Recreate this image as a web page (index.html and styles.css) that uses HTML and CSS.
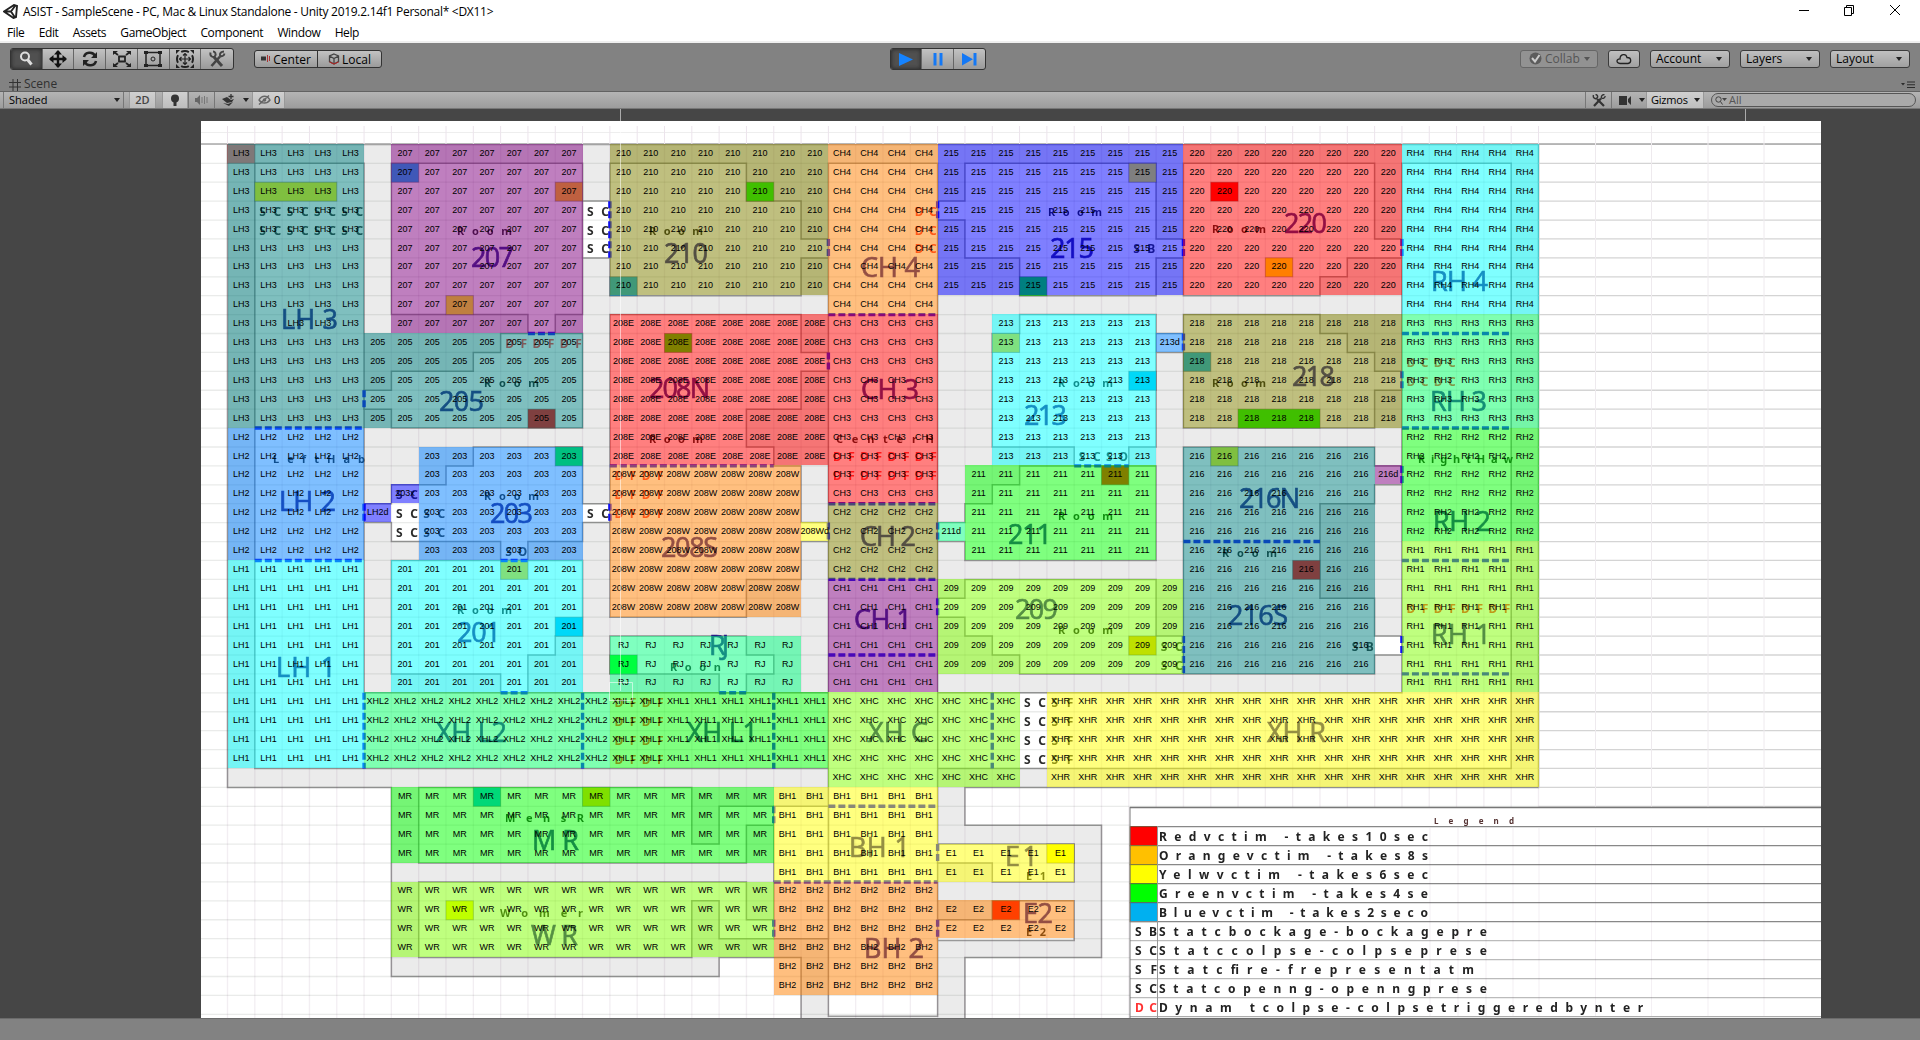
FILE: index.html
```html
<!DOCTYPE html>
<html lang="en">
<head>
<meta charset="utf-8">
<title>ASIST - SampleScene - Unity</title>
<link rel="stylesheet" href="styles.css">
</head>
<body>
<header class="titlebar">
  <svg class="logo" width="15" height="15" viewBox="0 0 15 15"><path d="M1 7.5 11 1l3 1-1 11-2.500 1zM1 7.500h7M8 7.500 12 2M8 7.500l4 6" fill="none" stroke="#222" stroke-width="1.900"/></svg>
  <span class="title">ASIST - SampleScene - PC, Mac &amp; Linux Standalone - Unity 2019.2.14f1 Personal* &lt;DX11&gt;</span>
  <svg class="winctl" width="112" height="20" viewBox="0 0 112 20" fill="none" stroke="#000"><path d="M4 10.500h10M49.500 7.500h7v8h-7zM51.500 7.500v-2h7v8h-2M95 5l10 10M105 5 95 15"/></svg>
</header>
<nav class="menu"><span>File</span><span>Edit</span><span>Assets</span><span>GameObject</span><span>Component</span><span>Window</span><span>Help</span></nav>

<div class="toolbar">
  <div class="group tools">
    <i class="on"><svg viewBox="0 0 22 20"><circle cx="10" cy="7.500" r="4" fill="none" stroke="#ddd" stroke-width="2"/><path d="m12.500 10.500 4 5" stroke="#ddd" stroke-width="3"/></svg></i>
    <i><svg viewBox="0 0 22 20"><path d="M11 2v16M3 10h16" stroke="#111" stroke-width="2.400"/><path d="m11 1 4 4.500H7zM11 19l4-4.500H7zM2 10l4.500-4v8zM20 10l-4.500-4v8z" fill="#111"/></svg></i>
    <i><svg viewBox="0 0 22 20"><path d="M5 8c1-5 9-6 11-1M17 12c-1 5-9 6-11 1" fill="none" stroke="#222" stroke-width="2.500"/><path d="M18 3v6h-6zM4 17v-6h6z" fill="#222"/></svg></i>
    <i><svg viewBox="0 0 22 20"><path d="M8 7.500h6v5H8zM7 6 3 3m12 3 4-3M7 14l-4 3m12-3 4 3" fill="none" stroke="#222" stroke-width="1.800"/><path d="M2 2h5L2 6zM20 2h-5l5 4zM2 18h5l-5-4zM20 18h-5l5-4z" fill="#222"/></svg></i>
    <i><svg viewBox="0 0 22 20"><path d="M4 3.500h14v13H4z" fill="none" stroke="#222" stroke-width="1.500"/><path d="M2 2h4v3H2zM16 2h4v3h-4zM2 15h4v3H2zM16 15h4v3h-4z" fill="#222"/><circle cx="11" cy="10" r="2" fill="none" stroke="#222"/></svg></i>
    <i><svg viewBox="0 0 22 20"><path d="M11 5v10M6 10h10M9 6.500l2-2 2 2M9 13.500l2 2 2-2M7.500 8l-2 2 2 2M14.500 8l2 2-2 2" fill="none" stroke="#222" stroke-width="1.200"/><circle cx="11" cy="10" r="8" fill="none" stroke="#222" stroke-width="2" stroke-dasharray="8 4.500" stroke-dashoffset="4"/><path d="M2 1h4L2 5zM20 1h-4l4 4zM2 19h4l-4-4zM20 19h-4l4-4z" fill="#222"/></svg></i>
    <i><svg viewBox="0 0 22 20"><path d="M5.500 17 14 7.500" stroke="#444" stroke-width="2.600"/><path d="m8 8 8 9" stroke="#444" stroke-width="3"/><path d="M4.500 3.500c-1 4 3 5.500 4.500 3.500s0-4.500-2-4.500M18 2.500c-3 0-4.500 2-4 4 1.500 1.500 4 .5 4.500-2" fill="none" stroke="#444" stroke-width="1.900"/></svg></i>
  </div>
  <div class="group pivot">
    <b><svg width="10" height="8" viewBox="0 0 10 8"><path d="M0 1.500h5v4H0z" fill="#333"/><path d="M6 0h1v7H6zM8 1h1v5H8z" fill="#a33"/></svg>Center</b>
    <b><svg width="12" height="12" viewBox="0 0 12 12"><path d="m6 1 4.500 2v5.500L6 11 1.500 8.500V3zM1.500 3 6 5.500 10.500 3M6 5.500V11" fill="none" stroke="#444" stroke-width="1.300"/><path d="m1.500 9 4.500 2 4.500-2" stroke="#b22" fill="none"/></svg>Local</b>
  </div>
  <div class="group play">
    <i class="on"><svg viewBox="0 0 22 20"><path d="m4 4 14 6.500L4 17z" fill="#1583ff"/></svg></i>
    <i><svg viewBox="0 0 22 20"><path d="M6.500 4h3v12.500h-3zM12.500 4h3v12.500h-3z" fill="#1478f5"/></svg></i>
    <i><svg viewBox="0 0 22 20"><path d="m4 4 11 6.200L4 16.500zM15.500 4h3v12.500h-3z" fill="#1478f5"/></svg></i>
  </div>
  <div class="right">
    <b class="btn off"><svg width="13" height="13" viewBox="0 0 13 13"><circle cx="6.500" cy="6.500" r="6" fill="#5c5c5c"/><path d="m3 6 3 3.500L10.500 3" fill="none" stroke="#ccc" stroke-width="2"/></svg>Collab<em></em></b>
    <b class="btn cloud"><svg width="16" height="12" viewBox="0 0 16 12"><path d="M4 10.500C-.5 10 .5 5.500 4 6 4 1 10 0 11 4.500c5 0 4.500 5.500 1 6z" fill="none" stroke="#222" stroke-width="1.300"/></svg></b>
    <b class="btn wide">Account<em></em></b>
    <b class="btn wide">Layers<em></em></b>
    <b class="btn wide">Layout<em></em></b>
  </div>
</div>

<div class="tabs">
  <svg width="12" height="12" viewBox="0 0 12 12"><path d="M4 0v12M8.500 0v12M0 3.500h12M0 8h12" stroke="#333"/></svg>
  <span>Scene</span>
  <svg class="tabmenu" width="14" height="8" viewBox="0 0 14 8"><path d="M0 2h4L2 4.500zM6 .500h8v1H6zM6 3.200h8v1H6zM6 6h8v1H6z" fill="#2c2c2c"/></svg>
</div>

<div class="viewbar">
  <span class="shaded">Shaded<em></em></span>
  <span class="lit two">2D</span>
  <span class="lit bulb"><svg width="10" height="13" viewBox="0 0 10 13"><circle cx="5" cy="4.500" r="4" fill="#333"/><path d="M3.500 8h3v4h-3z" fill="#333"/></svg></span>
  <span class="audio"><svg width="13" height="10" viewBox="0 0 13 10"><path d="M0 3h2l3-3v10L2 7H0z" fill="#666"/><path d="M7 2v6M9.500 1v8M12 2v6" stroke="#777"/></svg></span>
  <span class="fx"><svg width="13" height="12" viewBox="0 0 13 12"><path d="m0 5 5-2 4 3 3-1-2 3-5 1zM1 9l5 1 5-2-4 4z" fill="#333"/><path d="M9 0v5M6.500 2.500h5" stroke="#333" stroke-width="1.300"/></svg><em></em></span>
  <span class="lit eye"><svg width="13" height="10" viewBox="0 0 13 10"><path d="M1 5c3-5 8-5 11 0-3 4-8 4-11 0zM1 9.500 11 .5" fill="none" stroke="#666" stroke-width="1.400"/><circle cx="6.500" cy="5" r="1.800" fill="#666"/></svg>0</span>
  <span class="wrench"><svg width="14" height="13" viewBox="0 0 14 13"><path d="m2 12 7-7.500M5 5l7 7" fill="none" stroke="#333" stroke-width="2.200"/><path d="M1.500 1c-1 3 2 4.500 3.500 3s0-3.500-1.500-3.500M12.500.5C10 .5 9 2.500 9.500 4c1.500 1 3.500 0 3.700-2" fill="none" stroke="#333" stroke-width="1.400"/></svg></span>
  <span class="cam"><svg width="13" height="9" viewBox="0 0 13 9"><path d="M0 0h8v9H0zM9 3l3-3v9L9 6z" fill="#333"/></svg><em></em></span>
  <span class="lit giz">Gizmos<em></em></span>
  <span class="search"><svg width="12" height="9" viewBox="0 0 12 9"><circle cx="3.500" cy="3.500" r="2.700" fill="none" stroke="#444"/><path d="m5.500 5.500 2 3" stroke="#444"/><path d="M7 2h5L9.500 5z" fill="#444"/></svg>All</span>
</div>

<main class="viewport">
  <div class="map">
    <svg id="plan" width="1620" height="897" viewBox="201 121 1620 897"></svg>
    <div id="rooms" class="rooms"></div>
  </div>
  <svg class="gizmo" width="1920" height="909" viewBox="0 109 1920 909"><path d="M620.500 109v582M1745.500 109v12M609.500 682.500h23v18h-23z" fill="none" stroke="#fff" stroke-opacity=".55"/></svg>
</main>
<footer class="status"></footer>
<script src="plan.js"></script>
</body>
</html>
```
FILE: styles.css
```css
* { box-sizing: border-box; }
body { margin: 0; width: 1920px; height: 1040px; overflow: hidden; background: #828282; display: flex; flex-direction: column; font-family: "Open Sans", "Noto Sans", sans-serif; font-size: 12px; color: #000; }
svg { display: block; flex: none; }
.titlebar { height: 24px; background: #fff; display: flex; padding-left: 3px; }
.logo { margin-top: 4px; }
.title { margin-left: 5px; line-height: 23px; white-space: nowrap; letter-spacing: -0.28px; }
.winctl { margin-left: auto; margin-right: 13px; }
.menu { height: 19px; background: #fff; border-bottom: 2px solid #efefef; display: flex; gap: 14.2px; padding-left: 7px; line-height: 17px; letter-spacing: -0.38px; }
.toolbar { height: 35px; display: flex; align-items: flex-start; padding-top: 5px; position: relative; }
.group { display: flex; border: 1px solid #333; border-radius: 3px; height: 22px; overflow: hidden; background: linear-gradient(#c2c2c2, #9a9a9a); }
.group i { width: 32px; border-right: 1px solid #666; display: flex; justify-content: center; align-items: center; }
.group i:last-child { border: 0; }
.group i svg { width: 22px; height: 20px; }
.group .on { background: #505050; box-shadow: inset 0 0 4px #222; }
.tools { margin-left: 10px; width: 224px; }
.pivot { margin: 2px 0 0 20px; height: 18px; width: 128px; }
.pivot b { width: 64px; border-right: 1px solid #333; display: flex; align-items: center; justify-content: center; gap: 2px; font-weight: 400; }
.pivot b:last-child { border: 0; }
.play { margin-left: 508px; width: 96px; }
.right { margin: 2px 10px 0 auto; display: flex; gap: 10px; }
.btn { height: 18px; border: 1px solid #3c3c3c; border-radius: 3px; background: linear-gradient(#c0c0c0, #a0a0a0); font-weight: 400; display: flex; align-items: center; padding: 0 7px 1px 5px; }
em { width: 0; height: 0; border: 3px solid transparent; border-top: 4px solid #222; border-bottom: 0; }
.btn em { margin-left: auto; }
.off { width: 78px; padding-left: 8px; gap: 3px; color: #555; border-color: #666; background: #929292; }
.off em { border-top-color: #555; }
.cloud { width: 32px; padding: 0 7px; }
.wide { width: 80px; }
.tabs { height: 13px; display: flex; align-items: center; padding-left: 9px; gap: 3px; color: #303030; line-height: 13px; }
.tabs span { margin-top: -2px; }
.tabmenu { margin: 0 5px 0 auto; }
.viewbar { height: 18px; border-top: 1px solid #626262; border-bottom: 1px solid #777; background: linear-gradient(#b4b4b4, #9c9c9c); display: flex; font: 11px/16px "Open Sans", sans-serif; padding-left: 3px; }
.viewbar span { display: flex; align-items: center; border-left: 1px solid #777; border-right: 1px solid #777; }
.shaded { width: 121px; padding: 0 3px 0 5px; }
.shaded em, .giz em { margin-left: auto; }
.viewbar .lit { background: linear-gradient(#d0d0d0, #bebebe); border-color: #999; }
.two { margin-left: 5px; width: 27px; justify-content: center; font-weight: 600; color: #444; }
.bulb { margin-left: 6px; width: 26px; justify-content: center; }
.audio { width: 27px; justify-content: center; }
.viewbar .fx { width: 37px; padding-left: 7px; gap: 8px; border: 0; }
.eye { width: 33px; padding-left: 5px; gap: 3px; }
.wrench { margin-left: auto; width: 27px; justify-content: center; }
.viewbar .cam { width: 34px; padding-left: 7px; gap: 7px; border: 0; }
.giz { width: 58px; padding: 0 3px 0 4px; letter-spacing: -0.2px; }
.viewbar .search { width: 205px; height: 14px; margin: 1px 4px 0 7px; border: 1px solid #555; border-radius: 7px; background: #a9a9a9; padding-left: 3px; gap: 2px; color: #555; }
.viewport { height: 909px; background: #464646; position: relative; display: flex; padding: 12px 0 0 201px; }
.map { width: 1620px; height: 897px; background: #fff; position: relative; overflow: hidden; }
.gizmo { position: absolute; left: 0; top: 0; }
.rooms { position: absolute; left: 26.5px; top: 23px; width: 1311px; height: 851px; display: grid; grid-template-columns: repeat(48, 1fr); grid-template-rows: repeat(45, 1fr); font: 9px/1 "Liberation Sans", Arial, sans-serif; }
.room { display: grid; grid-auto-rows: 1fr; min-width: 0; min-height: 0; }
.room span { display: flex; align-items: center; justify-content: center; min-width: 0; min-height: 0; white-space: nowrap; }
.teal { background: rgba(0, 128, 128, .5); }
.azure { background: rgba(0, 128, 255, .5); }
.cyan { background: rgba(0, 255, 255, .5); }
.purple { background: rgba(128, 0, 128, .5); }
.olive { background: rgba(128, 128, 0, .5); }
.orange { background: rgba(255, 128, 0, .5); }
.blue { background: rgba(0, 0, 255, .5); }
.red { background: rgba(255, 0, 0, .5); }
.lime { background: rgba(128, 255, 0, .5); }
.green { background: rgba(0, 255, 0, .5); }
.mint { background: rgba(0, 255, 100, .5); }
.spring { background: rgba(0, 255, 128, .5); }
.yellow { background: rgba(255, 255, 0, .5); }
.big { font: 27px "Open Sans", sans-serif; fill: #281e86; stroke: #281e86; stroke-width: .7px; filter: blur(.5px); }
.small { font: 700 11px "Noto Sans", sans-serif; fill: #1c1c1c; filter: blur(.4px); }
.mark { font: 700 12px "Noto Sans", sans-serif; fill: #2c2c2c; filter: blur(.4px); }
.hot { fill: #f33; }
.legend { font: 700 12px "Noto Sans", sans-serif; fill: #222; filter: blur(.3px); }
.legend.hot { fill: #f33; }
.caption { font: 700 8px "Noto Sans", sans-serif; fill: #533; filter: blur(.3px); }
.status { height: 22px; border-top: 1px solid #6b6b6b; background: #828282; }
```
FILE: plan.js
```js
const X = c => 227.5 + c * 1311 / 48;
const Y = r => 144.4 + r * 851 / 45;
const out = [];
const line = (x1, y1, x2, y2, s, w = 1) => out.push(`<line x1="${x1}" y1="${y1}" x2="${x2}" y2="${y2}" stroke="${s}" stroke-width="${w}"/>`);
const pts = list => list.split(' ').map(p => { const [c, r] = p.split(',').map(Number); return X(c).toFixed(1) + ',' + Y(r).toFixed(1); }).join(' ');
const poly = (list, fill, stroke) => out.push(`<polygon points="${pts(list)}" fill="${fill}" stroke="${stroke}" stroke-width="1.5"/>`);
const text = (cls, s, x, y, w) => out.push(`<text class="${cls}" x="${x}" y="${y}" textLength="${w}">${s}</text>`);

// Building shell
poly('0,0 48,0 48,34 27,34 27,36 32,36 32,43 27,43 27,47 21,47 21,43 18,43 18,44 6,44 6,34 0,34', '#ebebeb', '#999');

// Open floor areas
[
  '1,1 5,1 5,29 43,29 43,1 47,1 47,33 1,33',
  '22,1 26,1 26,46.1 22,46.1',
  '6,1 13,1 13,9 12,9 12,10 11,10 11,9 6,9',
  '13,3 14,3 14,6 13,6',
  '10,10 13,10 13,15 6,15 6,14 5,14 5,13 6,13 6,12 9,12 9,11 10,11',
  '9,16 13,16 13,19 14,19 14,20 13,20 13,21 11,21 11,22 10,22 10,21 6,21 6,20 5,20 5,19 6,19 6,18 8,18 8,17 9,17',
  '6,22 13,22 13,26 12,26 12,27 11,27 11,29 10,29 10,28 6,28',
  '14,1 19,1 19,3 21,3 21,5 22,5 22,6 21,6 21,8 14,8',
  '14,9 21,9 21,11 22,11 22,12 21,12 21,14 19,14 19,16 20,16 20,17 21,17 21,20 22,20 22,21 21,21 21,23 19,23 19,25 14,25',
  '14,26 19,26 19,27 20,27 20,28 19,28 19,29 18,29 18,28 14,28',
  '27,1 34,1 34,5 35,5 35,6 34,6 34,8 29,8 29,6 27,6 27,4 26,4 26,3 27,3',
  '35,1 42,1 42,5 43,5 43,6 41,6 41,7 40,7 40,8 35,8',
  '29,9 34,9 34,16 33,16 33,17 31,17 31,16 28,16 28,10 29,10',
  '34,10 35,10 35,11 34,11',
  '35,9 40,9 40,10 41,10 41,11 42,11 42,12 43,12 43,13 42,13 42,15 35,15',
  '29,17 34,17 34,22 27,22 27,21 26,21 26,20 27,20 27,19 28,19 28,18 29,18',
  '27,23 34,23 34,26 35,26 35,28 29,28 29,27 28,27 28,26 27,26 27,25 26,25 26,24 27,24',
  '35,16 42,16 42,17 43,17 43,18 42,18 42,19 40,19 40,24 42,24 42,26 43,26 43,27 42,27 42,28 35,28',
  '7,34 17,34 17,37 18,37 18,35 20,35 20,36 19,36 19,38 7,38',
  '7,39 19,39 19,41 20,41 20,42 18,42 18,40 17,40 17,43 7,43',
  '20,35 22,35 22,42 20,42',
  '26,37 31,37 31,39 28,39 28,38 26,38',
  '26,41 28,41 28,40 31,40 31,42.1 26,42.1'
].forEach(p => poly(p, '#fff', '#999'));
out.push(`<rect x="${X(22) + 1}" y="${Y(28.9)}" width="${X(26) - X(22) - 2}" height="${Y(33.1) - Y(28.9)}" fill="#fff"/>`);

// Sheet rules
for (let r = 0; r < 47; r++) {
  line(201, Y(r), X(48), Y(r), 'rgba(60,70,60,.11)', 1.3);
  line(X(48), Y(r), 1821, Y(r), '#d4d4d4', 1.3);
}
line(201, 132.5, 1821, 132.5, '#eee');
line(201, 144, 1821, 144, '#aaa', 1.3);
for (let c = -1; c <= 48; c++) {
  line(X(c), 126, X(c), 144, '#ece4ec');
  line(X(c), 144, X(c), 1018, 'rgba(110,70,110,.09)', 1.3);
}
[1595.5, 1651.5, 1708, 1764].forEach(x => line(x, 126, x, 1018, '#eeeaee'));

// Victim cells: column, row, span, colour
const R = '#f00', O = '#ffc000', W = '#ff0', G = '#0f0', B = '#00b0f0';
[[0,0,1,'#ff7070'],[1,2,3,W],[6,1,1,B],[12,2,1,O],[8,8,1,W],[11,14,1,R],[12,16,1,G],[10,22,1,O],[12,25,1,B],[19,2,1,G],[14,7,1,B],
 [16,10,1,G],[14,27,1,G],[33,1,1,W],[29,7,1,G],[36,2,1,R],[38,6,1,W],[28,10,1,O],[33,12,1,B],[35,11,1,B],[37,14,3,G],[32,17,1,R],
 [36,16,1,W],[39,22,1,R],[33,26,1,O],[9,34,1,B],[13,34,1,O],[8,40,1,W],[30,37,1,W],[28,40,1,R]
].forEach(([c, r, n, f]) => out.push(`<rect x="${X(c)}" y="${Y(r)}" width="${X(n) - X(0)}" height="18.9" fill="${f}" stroke="rgba(60,60,60,.4)"/>`));

// Doorways
[[1,15,5,15],[1,22,5,22],[5,13,5,14],[5,19,5,20],[11,10,12,10],[14,3,14,6],[14,19,14,20],[22,9,26,9],[22,5,22,6],[22,11,22,12],[26,3,26,4],
 [35,5,35,6],[43,5,43,6],[35,10,35,11],[43,10,47,10],[43,12,43,13],[43,15,47,15],[43,17,43,18],[43,22,47,22],[43,28,47,28],[43,26,43,27],
 [14,17,20,17],[22,19,26,19],[22,20,22,21],[26,20,26,21],[22,23,26,23],[22,27,26,27],[26,24,26,25],[10,22,11,22],[10,29,11,29],[18,29,19,29],
 [5,29,5,33],[13,29,13,33],[20,29,20,33],[28,29,28,33],[31,17,33,17],[35,21,40,21],[35,26,35,28],[20,35,20,36],[22,35,26,35],[26,37,26,38],
 [20,39,26,39],[20,41,20,42],[26,41,26,42]
].forEach(([a, b, c, d]) => out.push(`<line x1="${X(a)}" y1="${Y(b)}" x2="${X(c)}" y2="${Y(d)}" stroke="#1010f0" stroke-width="3.4" stroke-dasharray="7 3"/>`));

// Room names
[['LH 3',281,329,57],['205',439,411,45],['207',471,267,43],['210',664,263,44],['CH 4',861,277,59],['208N',649,398,61],['CH 3',861,399,58],
 ['215',1050,258,44],['220',1284,233,43],['RH 4',1431,291,57],['218',1292,386,43],['RH 3',1430,411,57],['213',1024,425,43],['LH 2',279,511,57],
 ['203',490,523,43],['201',457,642,44],['LH 1',276,677,60],['XH L2',436,742,71],['208S',661,557,57],['CH 2',860,546,56],['CH 1',854,629,58],
 ['RJ',709,655,20],['XH L1',687,742,71],['XH C',868,742,60],['211',1008,544,44],['209',1015,619,43],['216N',1239,508,61],['216S',1228,625,60],
 ['RH 2',1433,531,58],['RH 1',1431,644,60],['XH R',1267,742,59],['M R',532,850,47],['W R',531,945,47],['BH 1',849,857,61],['BH 2',864,958,60],
 ['E1',1005,866,33],['E2',1023,923,30]
].forEach(a => text('big', ...a));
[['Room',457,235,55],['Room',484,387,55],['Room',649,235,54],['Room',1048,216,54],['Room',1212,233,54],['Room',1212,387,54],['Room',1058,387,55],
 ['Room',484,500,55],['Room',457,614,55],['Room',649,443,54],['CenterH',836,443,98],['LeftHab',273,463,92],['RightHaw',1418,463,95],['Roon',670,671,51],
 ['Room',1058,520,55],['Room',1058,634,55],['Room',1222,557,55],['MensR',505,822,79],['Womer',500,917,83],['E1',1026,880,20],['E2',1026,936,20]
].forEach(a => text('small', ...a));

// Obstacle codes: code, first column, last column, first row, last row
[['SC',1,4,3,4],['SC',13,13,3,5],['DF',10,12,10,10],['DC',25,25,3,5],['DF',22,25,16,17],['DF',14,15,17,19],['DF',14,15,29,32],['DC',43,44,11,12],
 ['DF',43,46,24,24],['SB',33,33,5,5],['SC',6,6,18,20],['SC',7,7,19,20],['SC',13,13,19,19],['SO',10,10,21,21],['SC',31,31,16,16],['SO',32,32,16,16],
 ['SC',34,34,26,27],['SB',41,41,26,26],['SC',29,29,29,32],['SF',30,30,29,32]
].forEach(([s, c1, c2, r1, r2]) => {
  for (let c = c1; c <= c2; c++) for (let r = r1; r <= r2; r++)
    text(s[0] === 'D' ? 'mark hot' : 'mark', s, X(c) + 4.5, Y(r) + 14.5, 22);
});

// Legend
out.push('<rect x="1130" y="807.5" width="691" height="211" fill="#fff"/>');
line(1130, 807.5, 1821, 807.5, '#777', 1.3);
text('caption', 'Legend', 1434, 824, 80);
[[R,'Redvctim -takes10sec',1428],[O,'Orangevctim -takes8s',1428],[W,'Yelwvctim -takes6sec',1428],[G,'Greenvctim -takes4se',1428],[B,'Bluevctim -takes2seco',1428],
 ['SB','Statcbockage-bockagepre',1487],['SC','Statccolpse-colpseprese',1487],['SF','Statcfire-frepresentatm',1474],['SC','Statcopenng-openngprese',1487],
 ['DC','Dynam tcolpse-colpsetriggeredbynter',1643]
].forEach(([k, s, end], i) => {
  const y = 826.7 + i * 19;
  line(1130, y, 1821, y, i < 6 ? '#888' : '#bbb', 1.3);
  if (k[0] === '#') out.push(`<rect x="1130" y="${y}" width="27.5" height="19" fill="${k}" stroke="rgba(80,60,0,.5)"/>`);
  else text(k === 'DC' ? 'legend hot' : 'legend', k, 1135, y + 14, 22);
  text('legend', s, 1159, y + 14, end - 1159);
});
line(1130, 1016.7, 1821, 1016.7, '#999');
line(1130, 807, 1130, 1018, '#777');
line(1157.5, 826, 1157.5, 1018, '#999');
[1430, 1458, 1486, 1513, 1539, 1595.5, 1651.5, 1708, 1764].forEach(x => line(x, 828, x, 1016, 'rgba(110,70,110,.08)'));
document.getElementById('plan').innerHTML = out.join('');

// Zones: label, column, row, columns, rows, tint
const host = document.getElementById('rooms');
[['LH3',0,0,5,15,'teal'],['LH2',0,15,5,7,'azure'],['LH1',0,22,5,11,'cyan'],['207',6,0,7,10,'purple'],['205',5,10,8,5,'teal'],['203',7,16,6,6,'azure'],
 ['203x',6,18,1,1,'blue'],['LH2d',5,19,1,1,'blue'],['201',6,22,7,7,'cyan'],['210',14,0,8,8,'olive'],['CH4',22,0,4,9,'orange'],['215',26,0,9,8,'blue'],
 ['220',35,0,8,8,'red'],['RH4',43,0,5,9,'cyan'],['RH3',43,9,5,6,'mint'],['RH2',43,15,5,6,'green'],['RH1',43,21,5,8,'lime'],['208E',14,9,8,8,'red'],
 ['CH3',22,9,4,10,'red'],['CH2',22,19,4,4,'olive'],['CH1',22,23,4,6,'purple'],['208W',14,17,7,8,'orange'],['208Wd',21,20,1,1,'yellow'],['RJ',14,26,7,3,'spring'],
 ['213',28,9,6,8,'cyan'],['213d',34,10,1,1,'azure'],['211',27,17,7,5,'green'],['211d',26,20,1,1,'spring'],['209',26,23,9,5,'lime'],['218',35,9,8,6,'olive'],
 ['216',35,16,7,12,'teal'],['216d',42,17,1,1,'purple'],['XHL2',5,29,9,4,'mint'],['XHL1',14,29,8,4,'green'],['XHC',22,29,7,5,'lime'],['XHR',30,29,18,5,'yellow'],
 ['MR',6,34,14,4,'green'],['WR',6,39,14,4,'lime'],['BH1',20,34,6,5,'yellow'],['BH2',20,39,6,6,'orange'],['E1',26,37,5,2,'yellow'],['E2',26,40,5,2,'orange']
].forEach(([name, c, r, w, h, tint]) => {
  const room = document.createElement('div');
  room.className = 'room ' + tint;
  room.style.gridArea = `${r + 1} / ${c + 1} / span ${h} / span ${w}`;
  room.style.gridTemplateColumns = `repeat(${w}, minmax(0, 1fr))`;
  room.innerHTML = `<span>${name}</span>`.repeat(w * h);
  host.appendChild(room);
});
```
